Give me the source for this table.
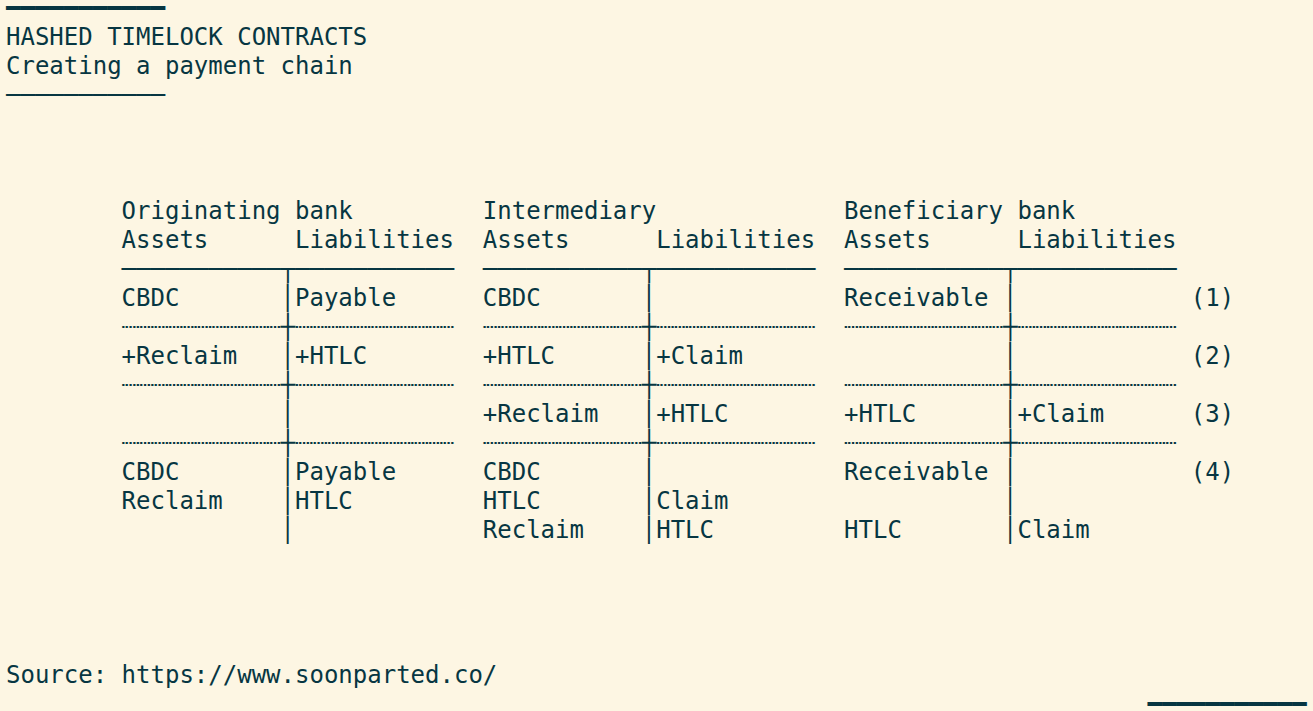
const W = 11;

type Block = [string, string];

const pad = (s: string, n: number) => s.padEnd(n, ' ');
const indent = ' '.repeat(8);

function cells(blocks: Block[], label = ''): string {
  const parts = blocks.map(([l, r]) => pad(l, W) + '│' + pad(r, W));
  return (indent + parts.join('  ') + (label ? ' ' + label : '')).trimEnd();
}

function rule(ch: string, cross: string): string {
  const b = ch.repeat(W) + cross + ch.repeat(W);
  return indent + [b, b, b].join('  ');
}

const lines: string[] = [
  '━'.repeat(11),
  'HASHED TIMELOCK CONTRACTS',
  'Creating a payment chain',
  '─'.repeat(11),
  '',
  '',
  '',
  indent + pad('Originating bank', 25) + pad('Intermediary', 25) + 'Beneficiary bank',
  indent + [0, 1, 2].map(() => pad('Assets', 12) + pad('Liabilities', 11)).join('  '),
  rule('─', '┬'),
  cells([['CBDC', 'Payable'], ['CBDC', ''], ['Receivable', '']], '(1)'),
  rule('┈', '┼'),
  cells([['+Reclaim', '+HTLC'], ['+HTLC', '+Claim'], ['', '']], '(2)'),
  rule('┈', '┼'),
  cells([['', ''], ['+Reclaim', '+HTLC'], ['+HTLC', '+Claim']], '(3)'),
  rule('┈', '┼'),
  cells([['CBDC', 'Payable'], ['CBDC', ''], ['Receivable', '']], '(4)'),
  cells([['Reclaim', 'HTLC'], ['HTLC', 'Claim'], ['', '']]),
  cells([['', ''], ['Reclaim', 'HTLC'], ['HTLC', 'Claim']]),
  '',
  '',
  '',
  '',
  'Source: https://www.soonparted.co/',
  ' '.repeat(79) + '━'.repeat(11),
];

export default function App() {
  return (
    <div className="w-[1313px] h-[711px] overflow-hidden bg-[#fdf6e3]">
      <pre className="mt-[-6px] pl-[6px] font-['DejaVu_Sans_Mono',monospace] text-[24px] leading-[29px] text-[#073642] whitespace-pre">
        {lines.join('\n')}
      </pre>
    </div>
  );
}
